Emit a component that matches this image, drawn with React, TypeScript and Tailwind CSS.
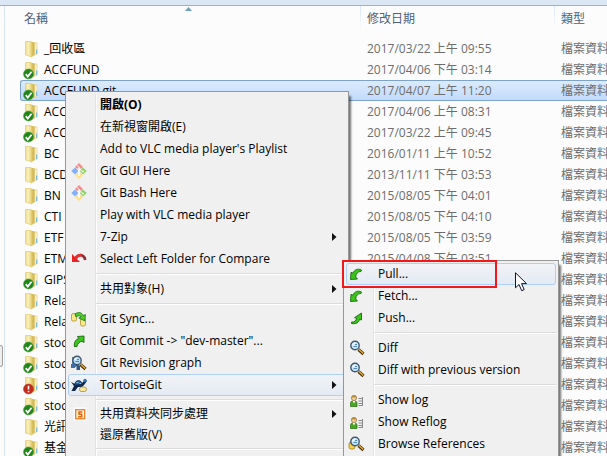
import React from "react";

type Status = "ok" | "alert" | "none";
type FileRow = { name: string; date: string; status: Status; selected?: boolean };

const files: FileRow[] = [
  { name: "_回收區", date: "2017/03/22 上午 09:55", status: "none" },
  { name: "ACCFUND", date: "2017/04/06 下午 03:14", status: "ok" },
  { name: "ACCFUND.git", date: "2017/04/07 上午 11:20", status: "ok", selected: true },
  { name: "ACC", date: "2017/04/06 上午 08:31", status: "ok" },
  { name: "ACC", date: "2017/03/22 上午 09:45", status: "ok" },
  { name: "BC", date: "2016/01/11 上午 10:52", status: "none" },
  { name: "BCD", date: "2013/11/11 下午 03:53", status: "none" },
  { name: "BN", date: "2015/08/05 下午 04:01", status: "none" },
  { name: "CTI", date: "2015/08/05 下午 04:10", status: "none" },
  { name: "ETF", date: "2015/08/05 下午 03:59", status: "none" },
  { name: "ETM", date: "2015/04/08 下午 03:51", status: "none" },
  { name: "GIPS", date: "", status: "ok" },
  { name: "Rela", date: "", status: "none" },
  { name: "Rela", date: "", status: "none" },
  { name: "stoc", date: "", status: "ok" },
  { name: "stoc", date: "", status: "ok" },
  { name: "stoc", date: "", status: "alert" },
  { name: "stoc", date: "", status: "ok" },
  { name: "光訊", date: "", status: "none" },
  { name: "基金", date: "", status: "ok" },
];

function FolderIcon({ status }: { status: Status }) {
  return (
    <svg width="16" height="18" viewBox="0 0 16 18" className="block shrink-0 overflow-visible" aria-hidden="true">
      <defs>
        <linearGradient id="folderFront" x1="0" x2="1" y1="0" y2="0">
          <stop offset="0" stopColor="#ecd98a" />
          <stop offset="0.4" stopColor="#faf2bc" />
          <stop offset="1" stopColor="#e3c968" />
        </linearGradient>
      </defs>
      <path d="M7 2.500h5.500v11.500l-5.500 2z" fill="#ecd88a" />
      <path d="M10.500 3.500l2.700-.5v11l-2.700 1z" fill="#f8efc4" stroke="#e3cf8b" strokeWidth=".5" />
      <path d="M6.500 1.500l4 1v13l-4 1z" fill="#d6ba56" />
      <path d="M1.500 1.500h5l1.700 1.500v14l-6.700-2z" fill="url(#folderFront)" stroke="#dcc468" strokeWidth=".6" />
      <path d="M12.700 9.500v4.500" stroke="#63b0e2" strokeWidth="1" />
      {status === "ok" && (
        <g>
          <circle cx="4.500" cy="13" r="5" fill="#1f8618" stroke="#4f9d45" strokeWidth=".6" />
          <path d="M1.800 13.200l2 2.300 3.700-4.800" fill="none" stroke="#fff" strokeWidth="1.800" />
        </g>
      )}
      {status === "alert" && (
        <g>
          <circle cx="4.500" cy="13" r="5" fill="#c42b1c" stroke="#a8402f" strokeWidth=".6" />
          <path d="M4.500 9.800v3.800M4.500 14.700v1.600" stroke="#fff" strokeWidth="1.600" />
        </g>
      )}
    </svg>
  );
}

type IconName =
  | "git" | "undo" | "sync" | "commit" | "graph" | "tortoise" | "share"
  | "pull" | "push" | "diff" | "log" | "browse";

function Glass({ lens = "#cfe8fa" }: { lens?: string }) {
  return (
    <g>
      <path d="M9.500 9.500l5 4.500" stroke="#4a3208" strokeWidth="3.200" />
      <path d="M10 9.500l4.300 4" stroke="#e0a63a" strokeWidth="1.600" />
      <circle cx="6" cy="5.500" r="4.200" fill={lens} stroke="#3f5870" strokeWidth="1.400" />
      <path d="M3.800 5a2.300 2.300 0 0 1 2.500-2" fill="none" stroke="#fff" strokeWidth="1.200" />
      <path d="M4.500 6.500h3.500M6 4.500h2" stroke="#4e88b8" strokeWidth="1" />
    </g>
  );
}

function MenuIcon({ name }: { name: IconName }) {
  return (
    <svg width="16" height="16" viewBox="0 0 16 16" className="block overflow-visible" aria-hidden="true">
      {name === "git" && (
        <g>
          <path d="M8 0l4 4-2 2-2-1.500L6 6 4 4z" fill="#f58b8b" />
          <path d="M4 4.500l3.300 3.500L4 11.500.3 8z" fill="#7fb0fa" />
          <path d="M12 4.500L15.700 8 12 11.500 8.700 8z" fill="#8fd163" />
          <path d="M8 16l-4-4 2-2 2 1.500L10 10l2 2z" fill="#fcdf86" />
          <path d="M6.200 2.500l3.300 3.300M8 6v6M9.500 7l2 1.500" fill="none" stroke="#fff" strokeWidth="1" />
          <circle cx="8" cy="12" r="1" fill="#fff" />
          <circle cx="12" cy="8.500" r="1" fill="#fff" />
        </g>
      )}
      {name === "undo" && (
        <g>
          <path d="M5 7C8 2.500 13.500 3.500 14.200 9" fill="none" stroke="#8c3038" strokeWidth="2.600" />
          <path d="M4 7.500C6 4.800 8 4 10.300 4.200" fill="none" stroke="#e83030" strokeWidth="2.800" />
          <path d="M1 3v8h8z" fill="#ee2020" />
        </g>
      )}
      {name === "sync" && (
        <g>
          <rect x="0.500" y="2.500" width="5" height="7.500" rx="1.500" fill="#f8e88a" stroke="#b09428" strokeWidth=".8" />
          <rect x="9.500" y="7.500" width="5" height="7.500" rx="1.500" fill="#f8e88a" stroke="#b09428" strokeWidth=".8" />
          <path d="M4 3C7 .8 11 1 11.800 4.500l2.700-.8-.7 6.200-6-2.900 2.200-1C9.500 4.300 7.500 4.200 5 6z" fill="#4fcf28" stroke="#187010" strokeWidth=".8" />
        </g>
      )}
      {name === "commit" && (
        <path d="M3.300 13.500V12C3.300 8.500 5 6.300 7.700 5.500L6.500 3.500 13 3v6.500L11 8.300C8.500 8.700 6.500 10.500 6 13.500z" fill="#3cc41c" stroke="#156b0b" strokeWidth=".9" />
      )}
      {name === "push" && (
        <path d="M2.500 12c3 .3 4.700-1 5-4L5.500 7.700 12.500 3v7l-2-.6C10 12.500 7 14.300 2.500 13.500z" fill="#3cc41c" stroke="#156b0b" strokeWidth=".9" />
      )}
      {name === "pull" && (
        <path d="M12.500 4C8.800 2.300 5.500 3.300 4 7.200L2 6.300 1.500 13.500 8.500 13 6.700 11C7 7.500 8.500 5.500 12 5.500z" fill="#3cc41c" stroke="#156b0b" strokeWidth=".9" />
      )}
      {name === "graph" && (
        <g>
          <path d="M2 2v8M2 12.500l5-3v5" fill="none" stroke="#1f426f" strokeWidth="1.300" />
          <Glass lens="#b8dcf5" />
          <rect x="0" y="9" width="4" height="4" fill="#3d6fa8" />
          <rect x="5.500" y="10.500" width="3.500" height="4.500" fill="#2d5789" />
        </g>
      )}
      {name === "tortoise" && (
        <g>
          <path d="M0 5l4 2 7-1 3-3 2 1-3 4-2 2H7l-3 4H.500L3 9z" fill="#10264d" />
          <path d="M3.500 8C4 2.500 10.500 2 11.500 7.500z" fill="#2a62a8" stroke="#10264d" strokeWidth=".8" />
          <path d="M5.500 5.500h2M8.500 6.500h1.500" stroke="#7ac4dc" strokeWidth="1.200" />
          <circle cx="14" cy="3.500" r="1.700" fill="#2f6fbf" />
          <rect x="8.500" y="10" width="7" height="4.500" rx="2" fill="#f9e69e" stroke="#a58835" strokeWidth=".8" />
        </g>
      )}
      {name === "share" && (
        <g>
          <rect x="2.500" y="1.500" width="13" height="13" fill="#fff" />
          <rect x="4.700" y="3.700" width="9" height="9" fill="#fff3e2" stroke="#ef8426" strokeWidth="1.400" />
          <path d="M11.300 6H8v2.200h2.700v2.500H7.200" fill="none" stroke="#e06410" strokeWidth="1.500" />
        </g>
      )}
      {name === "diff" && <Glass />}
      {name === "log" && (
        <g>
          <path d="M1.500 14.500V11Q1.500 9 4 9h1.500Q8 9 8 11v3.500z" fill="#48a820" stroke="#266a12" strokeWidth=".7" />
          <path d="M3.500 8.800h3L5 11.500z" fill="#fff" />
          <circle cx="5" cy="6" r="2.600" fill="#f2cf9a" stroke="#7c5b28" strokeWidth=".6" />
          <path d="M2.400 5.500C2.800 2.500 7 2.500 7.600 5.500z" fill="#b98d35" />
          <path d="M9.500 6.500H14M9.500 9H14M9.500 11.500H14M9.500 13.500H14M13.500 5v9" stroke="#8a8a8a" strokeWidth="1" />
        </g>
      )}
      {name === "browse" && (
        <g>
          <rect x="0" y="6" width="6" height="7" rx="2" fill="#f4cf4d" stroke="#a27c16" strokeWidth=".8" />
          <Glass />
        </g>
      )}
    </svg>
  );
}

type Entry =
  | { kind: "item"; label: string; icon?: IconName; bold?: boolean; arrow?: boolean; active?: boolean; compact?: boolean }
  | { kind: "line"; compact?: boolean };

const mainMenu: Entry[] = [
  { kind: "item", label: "開啟(O)", bold: true },
  { kind: "item", label: "在新視窗開啟(E)" },
  { kind: "item", label: "Add to VLC media player's Playlist" },
  { kind: "item", label: "Git GUI Here", icon: "git" },
  { kind: "item", label: "Git Bash Here", icon: "git" },
  { kind: "item", label: "Play with VLC media player" },
  { kind: "item", label: "7-Zip", arrow: true },
  { kind: "item", label: "Select Left Folder for Compare", icon: "undo" },
  { kind: "line" },
  { kind: "item", label: "共用對象(H)", arrow: true },
  { kind: "line" },
  { kind: "item", label: "Git Sync...", icon: "sync" },
  { kind: "item", label: 'Git Commit -> "dev-master"...', icon: "commit" },
  { kind: "item", label: "Git Revision graph", icon: "graph" },
  { kind: "item", label: "TortoiseGit", icon: "tortoise", arrow: true, active: true },
  { kind: "line", compact: true },
  { kind: "item", label: "共用資料夾同步處理", icon: "share", arrow: true, compact: true },
  { kind: "item", label: "還原舊版(V)", compact: true },
  { kind: "line" },
];

const gitMenu: Entry[] = [
  { kind: "item", label: "Pull...", icon: "pull", active: true },
  { kind: "item", label: "Fetch...", icon: "pull" },
  { kind: "item", label: "Push...", icon: "push" },
  { kind: "line" },
  { kind: "item", label: "Diff", icon: "diff" },
  { kind: "item", label: "Diff with previous version", icon: "diff" },
  { kind: "line" },
  { kind: "item", label: "Show log", icon: "log" },
  { kind: "item", label: "Show Reflog", icon: "log" },
  { kind: "item", label: "Browse References", icon: "browse" },
];

function Menu({ entries, label }: { entries: Entry[]; label: string }) {
  return (
    <div
      role="menu"
      aria-label={label}
      className="h-full border border-b-0 border-[#979797] bg-[#f0f0f0] px-0.5 pt-0.5 shadow-[2px_5px_2px_rgba(0,0,0,0.55)]"
    >
      <div className="h-full bg-[linear-gradient(90deg,transparent_27px,#e2e3e3_27px,#e2e3e3_28px,#ffffff_28px,#ffffff_29px,transparent_29px)]">
        {entries.map((e, i) =>
          e.kind === "line" ? (
            <div key={i} role="separator" className={`flex items-center pl-7 ${e.compact ? "h-[7px]" : "h-2"}`}>
              <div className="h-0.5 w-full border-b border-white bg-[#dcdcdc]" />
            </div>
          ) : (
            <button
              key={i}
              type="button"
              role="menuitem"
              className={`flex w-full items-center rounded-[3px] border pl-0.5 pr-2 text-left text-black ${
                e.compact ? "h-[21px]" : "h-[22px]"
              } ${e.active ? "border-[#aecff7] bg-linear-to-b from-[#f1f3f6]/90 to-[#e3eaf4]/90" : "border-transparent"} ${
                e.bold ? "font-bold" : ""
              }`}
            >
              <span className="w-[29px] shrink-0">{e.icon && <MenuIcon name={e.icon} />}</span>
              <span className="grow whitespace-nowrap">{e.label}</span>
              {e.arrow && (
                <svg width="5" height="8" viewBox="0 0 5 8" aria-hidden="true">
                  <path d="M0 0l4.500 4L0 8z" fill="#111" />
                </svg>
              )}
            </button>
          ),
        )}
      </div>
    </div>
  );
}

const headRule = "bg-[linear-gradient(180deg,#d9e8f8,#fcfcfc)] bg-[length:1px_24px] bg-no-repeat";

export default function App() {
  return (
    <div className="relative flex h-screen flex-col overflow-hidden bg-[#fcfcfc] font-['Open_Sans','Noto_Sans_CJK_TC',sans-serif] text-[12px] leading-[20px]">
      <div className="h-1.5 shrink-0 border-b border-[#a0afc3] bg-[#dce7f5]" />
      <div className="flex min-h-0 grow">
        <div className="flex w-[5px] shrink-0 flex-col border-r border-[#d6e5f5] pt-[339px]">
          <div className="h-[22px] w-[3px] rounded-r-sm border border-l-0 border-[#a0a0a0] bg-[#eeeeee]" />
        </div>
        <div className="min-w-0 grow overflow-hidden pl-[15px]">
          <table className="w-full table-fixed border-separate border-spacing-0">
            <colgroup>
              <col className="w-[340px]" />
              <col className="w-[194px]" />
              <col />
            </colgroup>
            <thead>
              <tr className="text-left text-[#4c607a]">
                <th className="relative h-8 p-0 pb-1.5 pl-1 font-normal">
                  名稱
                  <svg width="7" height="4" viewBox="0 0 7 4" className="absolute left-[165px] top-px" aria-hidden="true">
                    <path d="M0 4L3.500 0 7 4z" fill="#6d9fbd" />
                  </svg>
                </th>
                <th className={`h-8 p-0 pb-1.5 pl-[7px] font-normal ${headRule}`}>修改日期</th>
                <th className={`h-8 overflow-hidden whitespace-nowrap p-0 pb-1.5 pl-[7px] font-normal ${headRule}`}>類型</th>
              </tr>
            </thead>
            <tbody>
              {files.map((f, i) => {
                const cell = f.selected
                  ? "border-y border-[#7da2ce] bg-linear-to-b from-[#dcebfc] to-[#c1dbfc]"
                  : "border-y border-transparent";
                return (
                  <tr key={i} className="text-[#6d6d6d]">
                    <td className={`h-[21px] p-0 ${cell} ${f.selected ? "rounded-l-[3px] border-l pl-[3px]" : "pl-1"}`}>
                      <div className="flex h-[19px] items-center gap-1">
                        <FolderIcon status={f.status} />
                        <span className="text-black">{f.name}</span>
                      </div>
                    </td>
                    <td className={`h-[21px] whitespace-nowrap p-0 pl-[7px] leading-[19px] ${cell}`}>{f.date}</td>
                    <td className={`h-[21px] overflow-hidden whitespace-nowrap p-0 pl-[7px] leading-[19px] ${cell}`}>檔案資料夾</td>
                  </tr>
                );
              })}
            </tbody>
          </table>
        </div>
      </div>

      <div className="absolute bottom-0 left-[65px] top-[91px] w-[284px]">
        <Menu entries={mainMenu} label="檔案" />
      </div>
      <div className="absolute bottom-0 left-[343px] top-[260px] w-[216px]">
        <Menu entries={gitMenu} label="TortoiseGit" />
      </div>
      <div className="pointer-events-none absolute left-[342px] top-[260px] h-7 w-[155px] border-2 border-[#f01818]" />
      <svg width="13" height="20" viewBox="0 0 13 20" className="pointer-events-none absolute left-[515px] top-[272px]" aria-hidden="true">
        <path d="M.5.800v15l3.500-3.300 2.700 6.200 2.500-1.100-2.700-6h5z" fill="#fff" stroke="#101030" strokeWidth="1" />
      </svg>
    </div>
  );
}
